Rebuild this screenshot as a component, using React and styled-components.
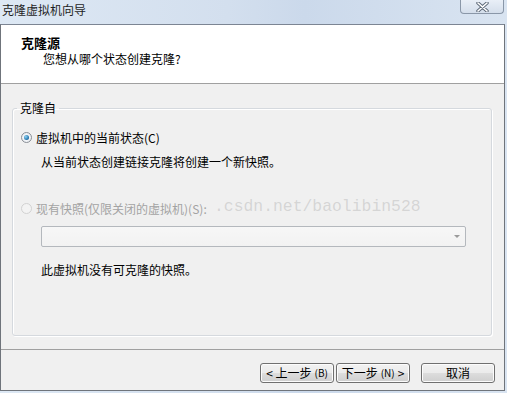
import React from 'react';
import styled, { createGlobalStyle } from 'styled-components';

const GlobalStyle = createGlobalStyle`
    html, body {
        margin: 0;
        padding: 0;
        background: #d6e2f0;
    }
    body {
        font-family: "Noto Sans CJK SC", "Liberation Sans", sans-serif;
        font-size: 12px;
        color: #000;
    }
`

const Window = styled.div`
    width: 507px;
    height: 393px;
    box-sizing: border-box;
    display: flex;
    flex-direction: column;
    padding: 0 2px 2px 0;
    background: linear-gradient(90deg, #dde8f4 0%, #d3dfee 45%, #cbd9eb 60%, #d9e4f1 100%);
`

const TitleBar = styled.div`
    height: 24px;
    flex-shrink: 0;
    display: flex;
    align-items: flex-start;
    justify-content: space-between;
    padding-left: 2px;
`

const Title = styled.span`
    font-size: 12px;
    line-height: 20px;
    color: #1e1e1e;
`

const CloseButton = styled.div`
    width: 44px;
    height: 14px;
    margin-right: 1px;
    box-sizing: border-box;
    border: 1px solid #8a97a8;
    border-top: none;
    border-radius: 0 0 4px 4px;
    background: linear-gradient(#e9eff7, #d4deeb);
    display: flex;
    align-items: center;
    justify-content: center;
`

const Client = styled.div`
    flex: 1;
    min-height: 0;
    display: flex;
    flex-direction: column;
    border: 1px solid #6f747b;
    border-top-color: #7c8593;
    background: #f0f0f0;
`

const Header = styled.div`
    height: 59px;
    flex-shrink: 0;
    box-sizing: border-box;
    background: #fff;
    border-bottom: 1px solid #a0a0a0;
    padding: 10px 0 0 20px;
    line-height: 16px;
`

const Heading = styled.div`
    font-size: 13px;
    font-weight: bold;
`

const SubHeading = styled.div`
    padding-left: 22px;
`

const Body = styled.div`
    position: relative;
    flex: 1;
    min-height: 0;
    box-sizing: border-box;
    padding: 16px 12px 13px 11px;
    display: flex;
`

const GroupBox = styled.fieldset`
    flex: 1;
    margin: 0;
    padding: 0;
    min-width: 0;
    border: 1px solid #d5d9de;
    border-radius: 3px;
    box-shadow: inset 1px 1px 0 #fff, 1px 1px 0 #fff;
    display: flex;
    flex-direction: column;
`

const Legend = styled.legend`
    margin-left: 4px;
    padding: 0 3px;
    line-height: 16px;
`

const RadioRow = styled.label`
    display: flex;
    align-items: center;
    gap: 4px;
    height: 16px;
    margin: ${p => p.$top}px 0 0 8px;
    color: ${p => (p.$disabled ? '#a3a3a3' : '#000')};
`

const Radio = styled.span`
    width: 11px;
    height: 11px;
    box-sizing: border-box;
    border-radius: 50%;
    border: 1px solid ${p => (p.$disabled ? '#d2d2d2' : '#8a8f96')};
    background: ${p => (p.$disabled ? '#f3f3f3' : 'radial-gradient(circle, #fff 0%, #e4e8ee 100%)')};
    display: flex;
    align-items: center;
    justify-content: center;
    &::after {
        content: '';
        display: ${p => (p.$checked ? 'block' : 'none')};
        width: 5px;
        height: 5px;
        border-radius: 50%;
        background: radial-gradient(circle at 35% 35%, #8fd4f4, #1f6fa8 70%, #19557f);
    }
`

const Text = styled.div`
    line-height: 16px;
    margin: ${p => p.$top}px 0 0 28px;
`

const Select = styled.div`
    height: 21px;
    box-sizing: border-box;
    margin: 10px 25px 0 28px;
    border: 1px solid #b4b8bd;
    border-radius: 2px;
    background: linear-gradient(#f7f7f7, #f2f2f2);
    display: flex;
    align-items: center;
    justify-content: flex-end;
    padding-right: 5px;
`

const Arrow = styled.span`
    width: 0;
    height: 0;
    border-left: 3px solid transparent;
    border-right: 3px solid transparent;
    border-top: 3px solid #9a9a9a;
`

const Watermark = styled.span`
    position: absolute;
    left: 213px;
    top: 113px;
    font-family: "Liberation Mono", "DejaVu Sans Mono", monospace;
    font-size: 16.4px;
    line-height: 20px;
    color: rgba(180, 180, 180, 0.45);
    pointer-events: none;
    white-space: nowrap;
`

const Footer = styled.div`
    height: 41px;
    flex-shrink: 0;
    box-sizing: border-box;
    border-top: 1px solid #a0a0a0;
    display: flex;
    justify-content: flex-end;
    align-items: flex-start;
    padding: 13px 9px 0 0;
`

const Button = styled.button`
    width: 74px;
    height: 20px;
    margin-left: ${p => p.$gap}px;
    padding: 0;
    box-sizing: border-box;
    border: 1px solid #707070;
    border-radius: 3px;
    background: linear-gradient(#f2f2f2 0%, #ebebeb 50%, #dddddd 51%, #cfcfcf 100%);
    box-shadow: inset 0 0 0 1px #fcfcfc;
    font-family: "Noto Sans CJK SC", "Liberation Sans", sans-serif;
    font-size: 12px;
    line-height: 16px;
    color: #000;
    display: flex;
    align-items: center;
    justify-content: center;
    gap: ${p => p.$spread}px;
`

const Small = styled.span`
    font-size: 10px;
`

function CloseIcon() {
    return (
        <svg width="13" height="10" viewBox="0 0 13 10">
            <path d="M2 1 L11 9 M11 1 L2 9" stroke="#5d6978" strokeWidth="3.4" strokeLinecap="round" />
            <path d="M2 1 L11 9 M11 1 L2 9" stroke="#fff" strokeWidth="1.6" strokeLinecap="round" />
        </svg>
    );
}

export default function App() {
    return (
        <>
            <GlobalStyle />
            <Window>
                <TitleBar>
                    <Title>克隆虚拟机向导</Title>
                    <CloseButton><CloseIcon /></CloseButton>
                </TitleBar>
                <Client>
                    <Header>
                        <Heading>克隆源</Heading>
                        <SubHeading>您想从哪个状态创建克隆?</SubHeading>
                    </Header>
                    <Body>
                        <GroupBox>
                            <Legend>克隆自</Legend>
                            <RadioRow $top={13}>
                                <Radio $checked />
                                虚拟机中的当前状态(C)
                            </RadioRow>
                            <Text $top={9}>从当前状态创建链接克隆将创建一个新快照。</Text>
                            <RadioRow $top={30} $disabled>
                                <Radio $disabled />
                                现有快照(仅限关闭的虚拟机)(S):
                            </RadioRow>
                            <Select><Arrow /></Select>
                            <Text $top={15}>此虚拟机没有可克隆的快照。</Text>
                        </GroupBox>
                        <Watermark>.csdn.net/baolibin528</Watermark>
                    </Body>
                    <Footer>
                        <Button $gap={0} $spread={3}>&lt; 上一步<Small>(B)</Small></Button>
                        <Button $gap={2} $spread={3}>下一步<Small>(N)</Small> &gt;</Button>
                        <Button $gap={11} $spread={0}>取消</Button>
                    </Footer>
                </Client>
            </Window>
        </>
    );
}
